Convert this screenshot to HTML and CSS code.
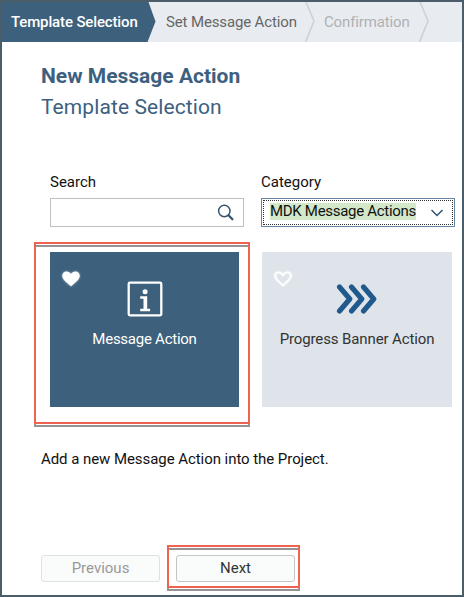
FILE: index.html
```html
<!DOCTYPE html>
<html lang="en">
<head>
<meta charset="utf-8">
<title>New Message Action</title>
<link rel="stylesheet" href="styles.css">
</head>
<body>
<main class="window">
  <nav class="wizard">
    <svg class="wizard-shape" width="460" height="40" viewBox="0 0 460 40" aria-hidden="true">
      <path class="step-fill" d="M0 0H146.500L153.500 19.500L145.500 40H0Z"/>
      <path class="step-line" d="M304 0L312 19L303.500 40M418 0L426 19L417.500 40"/>
    </svg>
    <span class="step current">Template Selection</span>
    <span class="step next-step">Set Message Action</span>
    <span class="step disabled">Confirmation</span>
  </nav>
  <header class="heading">
    <h1><span>New Message Action</span></h1>
    <h2><span>Template Selection</span></h2>
  </header>
  <section class="filters">
    <div class="field">
      <label>Search</label>
      <div class="input">
        <svg width="18" height="18" viewBox="0 0 18 18" aria-hidden="true"><circle cx="7.300" cy="7" r="5.700"/><path class="handle" d="M11.500 11.300L15.400 15.200"/></svg>
      </div>
    </div>
    <div class="field">
      <label>Category</label>
      <div class="input combo">
        <span class="selected">MDK Message Actions</span>
        <svg width="14" height="10" viewBox="0 0 14 10" aria-hidden="true"><path d="M1.500 2L7 7.500L12.500 2"/></svg>
      </div>
    </div>
  </section>
  <section class="tiles">
    <article class="tile active">
      <svg class="heart" width="22" height="20" viewBox="0 0 22 20" aria-hidden="true"><path d="M11 17.300C6 13 2.300 10.200 2.300 6.800C2.300 4.300 4.100 2.600 6.500 2.600C8.500 2.600 10 3.500 11 5.100C12 3.500 13.500 2.600 15.500 2.600C17.900 2.600 19.700 4.300 19.700 6.800C19.700 10.200 16 13 11 17.300Z"/></svg>
      <svg class="icon" width="36" height="36" viewBox="0 0 36 36" aria-hidden="true"><rect x="1.700" y="1.700" width="32.600" height="32.600" rx="1.200" fill="none" stroke="#fff" stroke-width="2.300"/><circle cx="18.100" cy="10.700" r="2.500" fill="#fff"/><path fill="#fff" d="M13.200 15.300H20.200V27.800H23.100V30.300H13.200V27.800H16.500V17.700H13.200Z"/></svg>
      <p class="t-message">Message Action</p>
      <div class="callout callout-tile"></div>
    </article>
    <article class="tile">
      <svg class="heart outline" width="22" height="20" viewBox="0 0 22 20" aria-hidden="true"><path d="M11 16.400C6.500 12.500 3.100 10 3.100 7C3.100 4.900 4.500 3.400 6.500 3.400C8.500 3.400 10 4.600 11 6.300C12 4.600 13.500 3.400 15.500 3.400C17.500 3.400 18.900 4.900 18.900 7C18.900 10 15.500 12.500 11 16.400Z"/></svg>
      <svg class="icon" width="42" height="36" viewBox="0 0 42 36" aria-hidden="true"><path fill="none" stroke="#205a8c" stroke-width="5.100" stroke-linecap="round" stroke-linejoin="round" d="M3.500 6L13.800 18L3.500 30M15.500 6L25.800 18L15.500 30M27.500 6L37.800 18L27.500 30"/></svg>
      <p class="t-progress">Progress Banner Action</p>
    </article>
  </section>
  <p class="description">Add a new Message Action into the Project.</p>
  <footer class="actions">
    <button class="btn" disabled><span>Previous</span></button>
    <div class="next-wrap">
      <button class="btn"><span>Next</span></button>
      <div class="callout callout-next"></div>
    </div>
  </footer>
</main>
</body>
</html>
```

FILE: styles.css
```css
* { box-sizing: border-box; }
body { margin: 0; font-family: Roboto, "Liberation Sans", sans-serif; font-size: 15px; color: #111; }
h1, h2, p { margin: 0; }
.window { width: 464px; height: 597px; border: 2px solid #4b5d69; background: #fff; overflow: hidden; }
.wizard { position: relative; height: 40px; display: flex; align-items: center; background: #e8ecf0; white-space: nowrap; }
.wizard-shape { position: absolute; left: 0; top: 0; }
.step-fill { fill: #3d607c; }
.step-line { fill: none; stroke: #cccfd3; stroke-width: 1.5; }
.step { position: relative; line-height: 20px; letter-spacing: -.14px; }
.current { width: 154px; padding-left: 9px; color: #fff; font-weight: 500; }
.next-step { width: 158px; padding-left: 10px; color: #666; }
.disabled { padding-left: 10px; color: #aeb1b4; }
.heading { padding: 19px 0 0 39px; color: #3d607f; white-space: nowrap; }
h1 { font-size: 21px; line-height: 31px; font-weight: 700; }
h2 { font-size: 21px; line-height: 30px; font-weight: 400; letter-spacing: .1px; }
.filters { display: flex; gap: 17px; margin-top: 49px; padding-left: 48px; }
.field { width: 194px; }
label { display: block; height: 27px; line-height: 22px; }
.input { height: 29px; border: 1px solid #bfbfbf; display: flex; align-items: center; justify-content: flex-end; padding-right: 8px; }
.input svg { fill: none; stroke: #34536f; stroke-width: 1.5; flex: none; }
.input .handle { stroke-width: 2.300; stroke-linecap: round; }
.combo { border: 1px solid #6686a8; outline: 1px dotted #333; outline-offset: -3px; justify-content: space-between; padding: 0 10px 0 8px; }
.selected { display: block; width: 146px; height: 17px; line-height: 17px; background: #d3e7c9; overflow: hidden; white-space: nowrap; margin-top: -2px; letter-spacing: -.3px; }
.tiles { display: flex; gap: 23px; padding: 25px 0 0 48px; }
.tile { position: relative; width: 189px; height: 155px; background: #dee4ea; color: #333; display: flex; flex-direction: column; align-items: center; padding-top: 29px; white-space: nowrap; }
.tile + .tile { width: 190px; }
.tile.active { background: #3d607c; color: #fff; }
.tile p { line-height: 20px; margin-top: 12px; }
.t-message { letter-spacing: -.25px; }
.t-progress { letter-spacing: -.12px; }
.heart { position: absolute; left: 10px; top: 17px; fill: #fff; filter: drop-shadow(0 0 1px rgba(255,255,255,.6)); }
.outline { fill: none; stroke: #fff; stroke-width: 1.8; }
.callout { position: absolute; border: 2px solid #ee6450; filter: drop-shadow(0 3px .5px rgba(0,0,0,.42)); pointer-events: none; }
.callout-tile { left: -16px; top: -10px; width: 216px; height: 182px; }
.callout-next { left: -9px; top: -10px; width: 133px; height: 43px; }
.description { margin-top: 41px; padding-left: 39px; line-height: 22px; white-space: nowrap; letter-spacing: -.06px; }
.actions { display: flex; gap: 16px; margin-top: 85px; padding-left: 39px; }
.next-wrap { position: relative; }
.btn { display: block; width: 119px; height: 27px; border: 1px solid #c3c5c7; border-radius: 3px; background: #fafbfb; color: #333; font: inherit; padding: 0; line-height: 25px; }
.btn:disabled { color: #999; border-color: #dfe1e2; }
```
